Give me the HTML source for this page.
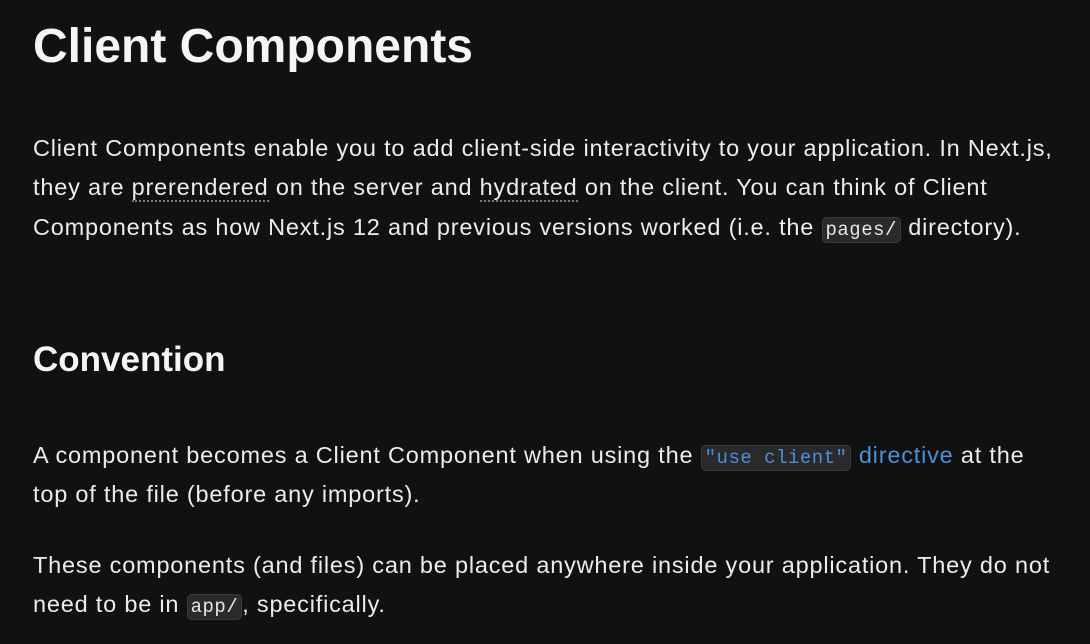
<!DOCTYPE html>
<html><head><meta charset="utf-8"><style>
body{margin:0;background:#111111;width:1090px;height:644px;overflow:hidden;font-family:"Liberation Sans",sans-serif;color:#ececec;}
.l{position:absolute;left:33px;white-space:nowrap;font-size:23.5px;letter-spacing:0.8px;}
h1,h2{margin:0;position:absolute;left:33px;font-weight:bold;color:#f5f5f5;white-space:nowrap}
h1{font-size:48px;top:19px}
h2{font-size:35px;top:340px}
code{font-family:"Liberation Mono",monospace;font-size:19px;letter-spacing:0.5px;background:#2a2a2a;border:1px solid #3a3a3a;border-radius:5px;padding:1px 3px;color:#e6e6e6}
.b{color:#4a8fd8}
.u{border-bottom:2px dotted #777;}
</style></head><body>
<h1>Client Components</h1>
<div class="l" style="top:135px">Client Components enable you to add client-side interactivity to your application. In Next.js,</div>
<div class="l" style="top:174px">they are <span class="u">prerendered</span> on the server and <span class="u">hydrated</span> on the client. You can think of Client</div>
<div class="l" style="top:214px">Components as how Next.js 12 and previous versions worked (i.e. the <code>pages/</code> directory).</div>
<h2>Convention</h2>
<div class="l" style="top:442px">A component becomes a Client Component when using the <code class="b">"use client"</code> <span class="b">directive</span> at the</div>
<div class="l" style="top:481px">top of the file (before any imports).</div>
<div class="l" style="top:552px">These components (and files) can be placed anywhere inside your application. They do not</div>
<div class="l" style="top:591px">need to be in <code>app/</code>, specifically.</div>
</body></html>
